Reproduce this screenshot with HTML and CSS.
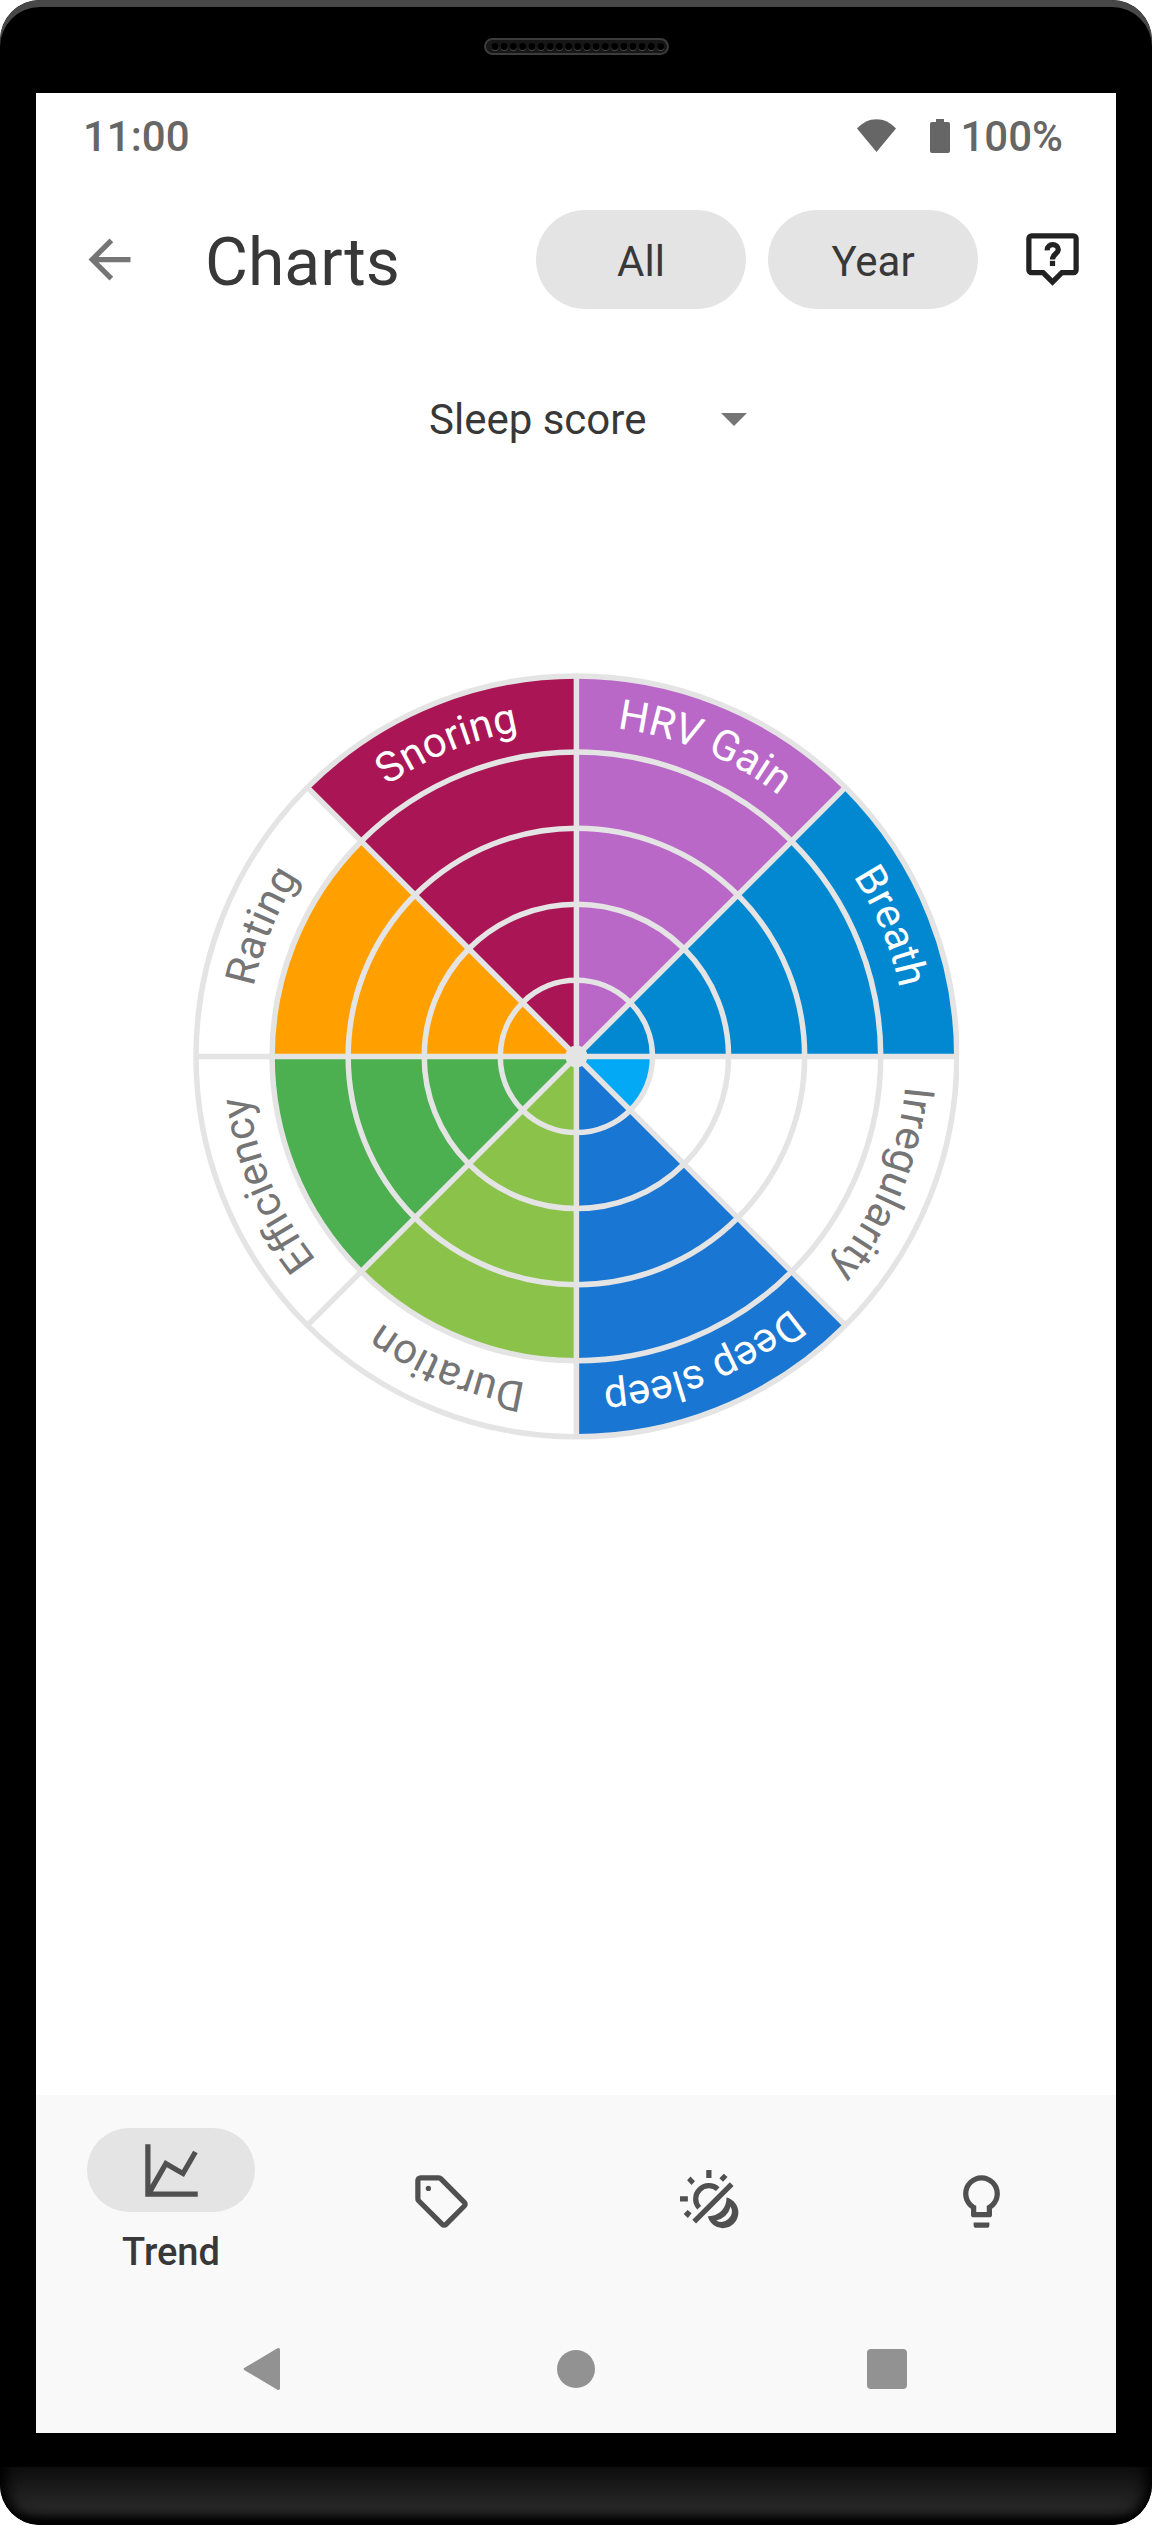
FILE: index.html
```html
<!DOCTYPE html>
<html lang="en">
<head>
<meta charset="utf-8">
<meta name="viewport" content="width=device-width, initial-scale=1">
<title>Charts</title>
<link rel="stylesheet" href="styles.css">
</head>
<body>
<div class="phone">
  <div class="bezel-top">
    <svg class="speaker" viewBox="0 0 185 17" aria-hidden="true">
      <rect class="speaker-rim" x="1" y="1" width="183" height="15" rx="7.5"/>
      <path class="speaker-glint" d="M11 9.5H177"/>
      <path class="speaker-hole" d="M11 8.5H177"/>
    </svg>
  </div>

  <div class="screen">
    <div class="status">
      <span>11:00</span>
      <div class="status-right">
        <svg class="wifi" viewBox="0 0 39 34" aria-hidden="true"><path d="M0 9.500C11-3 28-3 39 9.500L19.500 33Z"/></svg>
        <svg class="battery" viewBox="0 0 20 34" aria-hidden="true"><path d="M6 0h8v3h4a2 2 0 0 1 2 2v27a2 2 0 0 1-2 2H2a2 2 0 0 1-2-2V5a2 2 0 0 1 2-2h4Z"/></svg>
        <span>100%</span>
      </div>
    </div>

    <header class="app-bar">
      <button class="icon-button back" type="button" aria-label="Back">
        <svg viewBox="0 0 24 24"><path d="M20 11H7.830l5.590-5.590L12 4l-8 8 8 8 1.410-1.410L7.830 13H20v-2Z"/></svg>
      </button>
      <h1 class="title">Charts</h1>
      <div class="filters">
        <button class="pill" type="button">All</button>
        <button class="pill" type="button">Year</button>
      </div>
      <button class="icon-button help" type="button" aria-label="Help">
        <svg viewBox="0 0 24 24"><path d="M4 2H20A2 2 0 0 1 22 4V16A2 2 0 0 1 20 18H16L12 22L8 18H4A2 2 0 0 1 2 16V4A2 2 0 0 1 4 2M4 4V16H8.830L12 19.170L15.170 16H20V4H4Z"/><path class="question" d="M10 8.500C9.800 5.700 14.300 5.700 14.200 8.300C14.100 9.800 12 10 12 12"/><path d="M11 12.500h2v2h-2z"/></svg>
      </button>
    </header>

    <main class="content">
      <div class="picker">
        <select class="picker-select" aria-label="Chart type">
          <option>Sleep score</option>
        </select>
        <svg class="picker-arrow" viewBox="0 0 26 13" aria-hidden="true"><path d="M0 0H26L13 13Z"/></svg>
      </div>

      <svg class="wheel" viewBox="-383 -383 766 766" role="img" aria-label="Sleep score">
        <defs>
          <path id="label-ring" d="M0-330A330 330 0 0 1 0 330A330 330 0 0 1 0-330"/>
        </defs>
        <g>
          <path fill="#ba68c8" d="M0 0V-380A380 380 0 0 1 268.700-268.700Z"/>
          <path fill="#0288d1" d="M0 0L268.700-268.700A380 380 0 0 1 380 0Z"/>
          <path fill="#03a9f4" d="M0 0H76A76 76 0 0 1 53.700 53.700Z"/>
          <path fill="#1976d2" d="M0 0L268.700 268.700A380 380 0 0 1 0 380Z"/>
          <path fill="#8bc34a" d="M0 0V304A304 304 0 0 1-215 215Z"/>
          <path fill="#4caf50" d="M0 0L-215 215A304 304 0 0 1-304 0Z"/>
          <path fill="#ffa000" d="M0 0H-304A304 304 0 0 1-215-215Z"/>
          <path fill="#aa1655" d="M0 0L-268.700-268.700A380 380 0 0 1 0-380Z"/>
        </g>
        <g class="wheel-lines">
          <circle r="76"/><circle r="152"/><circle r="228"/><circle r="304"/><circle r="380"/>
          <path d="M-380 0H380M0-380V380M-268.700-268.700L268.700 268.700M268.700-268.700L-268.700 268.700"/>
        </g>
        <circle class="wheel-hub" r="11"/>
        <g class="wheel-labels">
          <text class="on-fill"><textPath href="#label-ring" startOffset="6.25%">HRV Gain</textPath></text>
          <text class="on-fill"><textPath href="#label-ring" startOffset="18.75%">Breath</textPath></text>
          <text><textPath href="#label-ring" startOffset="31.25%">Irregularity</textPath></text>
          <text class="on-fill"><textPath href="#label-ring" startOffset="43.75%">Deep sleep</textPath></text>
          <text><textPath href="#label-ring" startOffset="56.25%">Duration</textPath></text>
          <text><textPath href="#label-ring" startOffset="68.75%">Efficiency</textPath></text>
          <text><textPath href="#label-ring" startOffset="81.25%">Rating</textPath></text>
          <text class="on-fill"><textPath href="#label-ring" startOffset="93.75%">Snoring</textPath></text>
        </g>
      </svg>
    </main>

    <footer class="bottom">
      <nav class="tabs">
        <a class="tab" href="#trend" aria-current="page">
          <span class="tab-pill"><svg viewBox="0 0 24 24" aria-hidden="true"><path d="M16 11.780L20.240 4.450L21.970 5.450L16.740 14.500L10.230 10.750L4.950 20H22V22H2V2H4V17.540L9.500 8L16 11.780Z"/></svg></span>
          <span class="tab-label">Trend</span>
        </a>
        <a class="tab" href="#tags" aria-label="Tags">
          <svg viewBox="0 0 24 24"><path d="M21.410 11.580L12.410 2.580A2 2 0 0 0 11 2H4A2 2 0 0 0 2 4V11A2 2 0 0 0 2.590 12.420L11.590 21.420A2 2 0 0 0 13 22A2 2 0 0 0 14.410 21.410L21.410 14.410A2 2 0 0 0 22 13A2 2 0 0 0 21.410 11.580M13 20L4 11V4H11L20 13Z"/><circle cx="7" cy="7" r="1"/></svg>
        </a>
        <a class="tab" href="#day-night" aria-label="Day and night">
          <svg viewBox="0 0 24 24"><path d="M10 0h2v3h-2zM0 10h3v2H0zM16.700 1.400L18.100 2.700L16.400 4.500L15 3.100ZM4 2.500L5.700 4.300L4.400 5.700L2.700 3.900ZM2.900 15.200L4.400 16.500L3 18.300L1.400 16.800Z"/><path class="line" d="M14.400 7.300A5 5 0 0 0 7.460 7.460A5 5 0 0 0 7.300 14.400M19.700 5.400L5.400 19.700"/><path fill-rule="evenodd" d="M17.700 10.500A5.900 5.900 0 1 1 10.600 17.600A6.700 6.700 0 0 0 17.700 10.500ZM19.300 13.900A7.500 7.500 0 0 1 13.800 19.200A4 4 0 0 0 19.300 13.900Z"/></svg>
        </a>
        <a class="tab" href="#advice" aria-label="Advice">
          <svg viewBox="0 0 24 24"><path d="M12 2A7 7 0 0 1 19 9C19 11.380 17.810 13.470 16 14.740V17A1 1 0 0 1 15 18H9A1 1 0 0 1 8 17V14.740C6.190 13.470 5 11.380 5 9A7 7 0 0 1 12 2M9 21V20H15V21A1 1 0 0 1 14 22H10A1 1 0 0 1 9 21M12 4A5 5 0 0 0 7 9C7 11.050 8.230 12.810 10 13.580V16H14V13.580C15.770 12.810 17 11.050 17 9A5 5 0 0 0 12 4Z"/></svg>
        </a>
      </nav>
      <div class="system-nav">
        <button type="button" aria-label="System back"><svg viewBox="0 0 44 44"><path d="M2 20.500L34 1.500Q37 0 37 3V41Q37 44 34 42.500L2 23.500Q-1 22 2 20.500Z"/></svg></button>
        <button type="button" aria-label="Home"><svg viewBox="0 0 44 44"><circle cx="22" cy="22" r="19"/></svg></button>
        <button type="button" aria-label="Recent apps"><svg viewBox="0 0 44 44"><rect x="2" y="2" width="40" height="40" rx="4"/></svg></button>
      </div>
    </footer>
  </div>

  <div class="bezel-bottom"></div>
</div>
</body>
</html>
```
FILE: styles.css
```css
* {
  box-sizing: border-box;
}

body {
  margin: 0;
  background: #fff;
  font-family: Roboto, "Noto Sans", sans-serif;
  font-size: 42px;
  color: #383838;
}

button,
select {
  border: 0;
  margin: 0;
  padding: 0;
  background: none;
  font: inherit;
  color: inherit;
}

svg {
  display: block;
  fill: currentColor;
}

.phone {
  display: flex;
  flex-direction: column;
  min-height: 100vh;
  overflow: hidden;
  border-radius: 40px;
  background: #000;
}

/* Device frame */
.bezel-top {
  display: flex;
  justify-content: center;
  height: 93px;
  padding-top: 38px;
  border-radius: 40px 40px 0 0;
  box-shadow: inset 0 7px 0 #484848;
}

.speaker {
  width: 185px;
  height: 17px;
}

.speaker-rim {
  fill: #171717;
  stroke: #3c3c3c;
  stroke-width: 2;
}

.speaker-glint,
.speaker-hole {
  fill: none;
  stroke: #4a4a4a;
  stroke-width: 7;
  stroke-linecap: round;
  stroke-dasharray: 0 9.2;
}

.speaker-hole {
  stroke: #000;
}

.bezel-bottom {
  height: 92px;
  border-radius: 0 0 40px 40px;
  background: linear-gradient(#000 34px, #0d0d0d 34px, #272727 74px, #232323 80px, #000 92px);
  box-shadow: inset 0 -14px 16px -10px #000, inset 14px 0 14px -8px #000, inset -14px 0 14px -8px #000;
}

.screen {
  display: flex;
  flex: 1;
  flex-direction: column;
  margin: 0 36px;
  background: #fff;
}

/* Status bar */
.status {
  display: flex;
  align-items: center;
  justify-content: space-between;
  height: 86px;
  padding: 0 53px 0 47px;
  font-weight: 500;
  color: #666;
}

.status-right {
  display: flex;
  align-items: center;
}

.wifi {
  width: 39px;
  height: 34px;
  margin-right: 34px;
}

.battery {
  width: 20px;
  height: 34px;
  margin-right: 10px;
}

/* App bar */
.app-bar {
  display: flex;
  align-items: center;
  height: 161px;
  padding: 0 32px 0 42px;
}

.icon-button svg {
  width: 63px;
  height: 63px;
}

.back {
  color: #757575;
}

.help {
  margin-left: 43px;
  color: #222;
}

.question,
.line {
  fill: none;
  stroke: currentColor;
  stroke-width: 2;
}

.title {
  margin: 0 auto 0 64px;
  padding-top: 6px;
  font-size: 66px;
  font-weight: 400;
}

.filters {
  display: flex;
  gap: 22px;
}

.pill {
  width: 210px;
  height: 99px;
  padding-top: 4px;
  border-radius: 50px;
  background: #e4e4e4;
}

/* Chart */
.content {
  display: flex;
  flex: 1;
  flex-direction: column;
  align-items: center;
}

.picker {
  display: grid;
  align-items: center;
  width: 342px;
  height: 158px;
}

.picker-select {
  grid-area: 1 / 1;
  appearance: none;
  width: 100%;
  padding-left: 24px;
}

.picker-arrow {
  grid-area: 1 / 1;
  justify-self: end;
  width: 26px;
  height: 13px;
  color: #757575;
  pointer-events: none;
}

.wheel {
  width: 71%;
  margin-top: 175px;
}

.wheel-lines {
  fill: none;
  stroke: #e4e4e4;
  stroke-width: 5.5;
}

.wheel-hub {
  fill: #e4e4e4;
}

.wheel-labels {
  fill: #757575;
  text-anchor: middle;
}

.on-fill {
  fill: #fff;
}

/* Bottom navigation */
.bottom {
  background: #f9f9f9;
}

.tabs {
  display: grid;
  grid-template-columns: repeat(4, 1fr);
  height: 212px;
}

.tab {
  display: flex;
  flex-direction: column;
  align-items: center;
  justify-content: center;
  gap: 18px;
  color: #505050;
  text-decoration: none;
}

.tab svg {
  width: 63px;
  height: 63px;
}

.tab-pill {
  display: grid;
  place-items: center;
  width: 168px;
  height: 84px;
  border-radius: 42px;
  background: #e4e4e4;
}

.tab-label {
  font-size: 38px;
  font-weight: 500;
  line-height: 44px;
  color: #383838;
}

.system-nav {
  display: grid;
  grid-template-columns: repeat(3, 1fr);
  height: 126px;
  padding: 0 74px 2px;
  color: #929292;
}

.system-nav button {
  display: grid;
  place-items: center;
}

.system-nav svg {
  width: 44px;
  height: 44px;
}
```
